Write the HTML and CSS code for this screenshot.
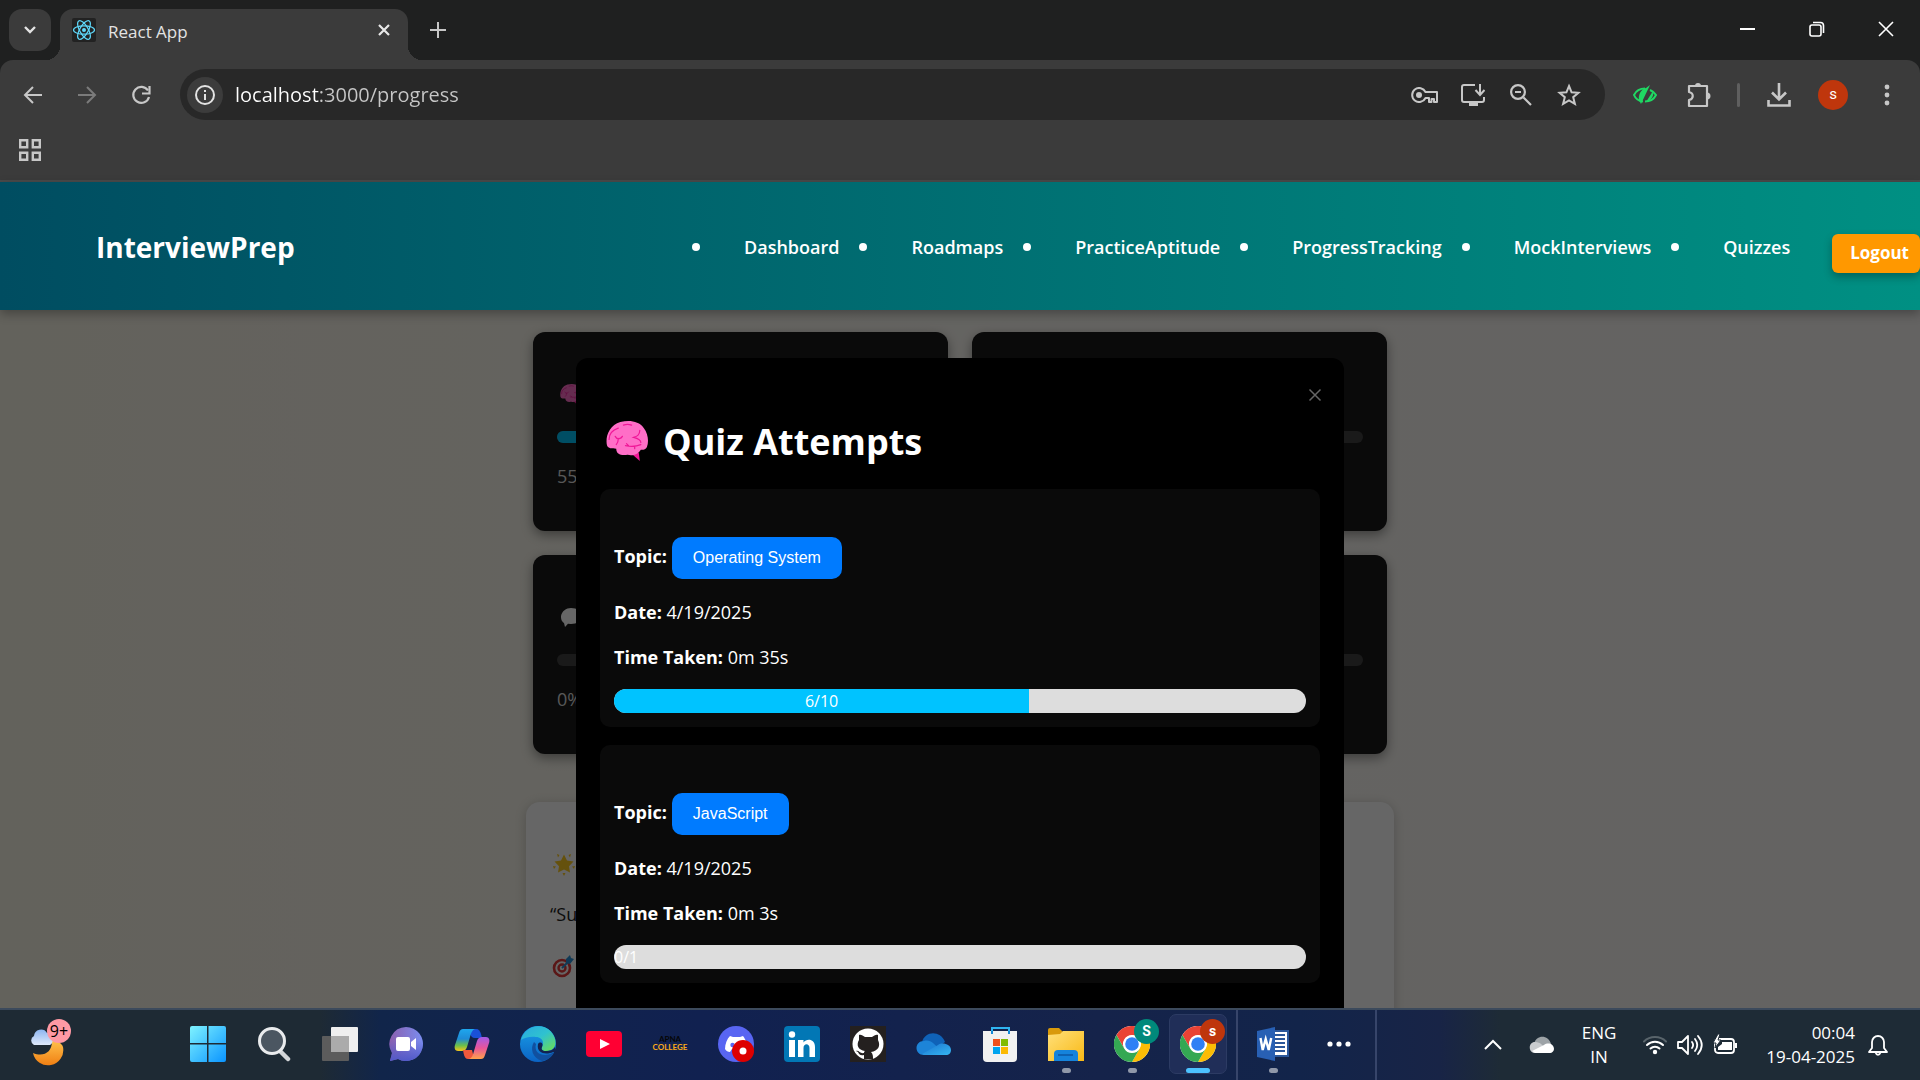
FILE: index.html
```html
<!DOCTYPE html>
<html lang="en">
<head>
<meta charset="utf-8">
<title>React App</title>
<link rel="stylesheet" href="styles.css">
</head>
<body>
<svg class="defs" aria-hidden="true">
  <defs>
    <linearGradient id="win" x1="0" y1="0" x2="1" y2="1"><stop offset="0" stop-color="#7ff3ff"/><stop offset="1" stop-color="#0a94ff"/></linearGradient>
    <linearGradient id="moon" x1="0" y1="0" x2="0" y2="1"><stop offset="0" stop-color="#ffc04a"/><stop offset="1" stop-color="#f07f13"/></linearGradient>
    <linearGradient id="cloud" x1="0" y1="0" x2="0" y2="1"><stop offset="0" stop-color="#8db5f0"/><stop offset="1" stop-color="#dfe9fb"/></linearGradient>
    <linearGradient id="chat" x1="0" y1="0" x2="1" y2="0"><stop offset="0" stop-color="#8a5fae"/><stop offset="1" stop-color="#7a8df0"/></linearGradient>
    <linearGradient id="chat2" x1="0" y1="0" x2="0" y2="1"><stop offset=".4" stop-color="#5059c9" stop-opacity="0"/><stop offset="1" stop-color="#5059c9"/></linearGradient>
    <linearGradient id="copA" x1="0" y1="0" x2="0" y2="1"><stop offset="0" stop-color="#1ea7ee"/><stop offset=".45" stop-color="#1f8bd6"/><stop offset=".75" stop-color="#6cc04a"/><stop offset="1" stop-color="#f6c51b"/></linearGradient>
    <linearGradient id="copB" x1="0" y1="0" x2="0" y2="1"><stop offset="0" stop-color="#a35be8"/><stop offset=".5" stop-color="#e8559a"/><stop offset="1" stop-color="#ffa24a"/></linearGradient>
    <linearGradient id="edgeA" x1="0" y1="0" x2="1" y2="1"><stop offset="0" stop-color="#2aa9e0"/><stop offset=".5" stop-color="#2fc2cf"/><stop offset="1" stop-color="#6fe04c"/></linearGradient>
    <linearGradient id="edgeB" x1="0" y1="0" x2="0" y2="1"><stop offset="0" stop-color="#1aa0e8"/><stop offset="1" stop-color="#0b63c4"/></linearGradient>
    <linearGradient id="od" x1="0" y1="0" x2="1" y2="1"><stop offset="0" stop-color="#1b74d0"/><stop offset="1" stop-color="#35b6f2"/></linearGradient>
    <linearGradient id="fold" x1="0" y1="0" x2="1" y2="1"><stop offset="0" stop-color="#ffe07a"/><stop offset="1" stop-color="#f9b916"/></linearGradient>
    <symbol id="brain" viewBox="0 0 41 39">
      <path fill="#f01898" d="M25 32l8 7-1-8z"/>
      <path fill="#ff6ec7" d="M1 24C-1 16 3 4 14 1c9-2 18-1 23 6 4 5 5 13 3 18-1 3-4 3-6 3-3 5-8 6-13 5-7 1-11-1-11-6-4 0-8 0-9-3z"/>
      <path fill="none" stroke="#f01898" stroke-width="1.2" stroke-linecap="round" d="M3 18c0-6 3-9 9-11M17 4c3-1 5-1 8 0M9 15c2 4 6 2 7 0M12 17c0 3 0 4-2 6M33 9c0 5-3 6-6 7 4 1 7 2 7 5M19 24c5 1 10 1 15-1M22 24l-2-2M28 25v2"/>
    </symbol>
    <symbol id="chrome" viewBox="0 0 36 36">
      <circle cx="18" cy="18" r="18" fill="#fff"/>
      <path fill="#ea4335" d="M2.4 9A18 18 0 0 1 33.600 9H18a9 9 0 0 0-7.800 13.500z"/>
      <path fill="#fbbc05" d="M33.600 9A18 18 0 0 1 18 36l7.800-13.500A9 9 0 0 0 18 9z"/>
      <path fill="#34a853" d="M18 36A18 18 0 0 1 2.400 9l7.800 13.500A9 9 0 0 0 25.800 22.500z"/>
      <circle cx="18" cy="18" r="8.500" fill="#fff"/><circle cx="18" cy="18" r="6.800" fill="#2f80f5"/>
    </symbol>
  </defs>
</svg>

<header class="browser">
  <div class="tabstrip">
    <button class="tab-search" aria-label="Search tabs"><svg width="14" height="10" viewBox="0 0 14 10"><path d="M2 2l5 5 5-5" fill="none" stroke="#e3e3e3" stroke-width="2.400"/></svg></button>
    <div class="tab">
      <svg width="24" height="24" viewBox="0 0 24 24"><rect width="24" height="24" rx="2" fill="#222"/><g fill="none" stroke="#5fd8fa" stroke-width="1.200"><ellipse cx="12" cy="12" rx="10.500" ry="4.200"/><ellipse cx="12" cy="12" rx="10.500" ry="4.200" transform="rotate(60 12 12)"/><ellipse cx="12" cy="12" rx="10.500" ry="4.200" transform="rotate(120 12 12)"/></g><circle cx="12" cy="12" r="2" fill="#5fd8fa"/></svg>
      <span class="tab-title">React App</span>
      <button class="icon-btn" aria-label="Close tab"><svg width="14" height="14" viewBox="0 0 14 14"><path d="M2 2l10 10M12 2L2 12" stroke="#e8e8e8" stroke-width="2.200"/></svg></button>
    </div>
    <button class="icon-btn new-tab" aria-label="New tab"><svg width="16" height="16" viewBox="0 0 16 16"><path d="M8 0v16M0 8h16" stroke="#c7c7c7" stroke-width="2"/></svg></button>
    <div class="window-controls">
      <button aria-label="Minimize"><svg width="16" height="16" viewBox="0 0 16 16"><path d="M0 8h15" stroke="#fff" stroke-width="2"/></svg></button>
      <button aria-label="Restore"><svg width="16" height="16" viewBox="0 0 16 16"><g fill="none" stroke="#fff" stroke-width="1.600"><rect x="1" y="4" width="11" height="11" rx="2"/><path d="M4 1.500h7.500a3 3 0 0 1 3 3V12"/></g></svg></button>
      <button aria-label="Close"><svg width="16" height="16" viewBox="0 0 16 16"><path d="M1 1l14 14M15 1L1 15" stroke="#fff" stroke-width="1.600"/></svg></button>
    </div>
  </div>
  <div class="toolbar">
    <div class="nav-buttons">
      <button aria-label="Back"><svg width="20" height="20" viewBox="0 0 20 20"><path d="M19 10H2M10 2l-8 8 8 8" fill="none" stroke="#c7c7c7" stroke-width="2"/></svg></button>
      <button aria-label="Forward"><svg width="20" height="20" viewBox="0 0 20 20"><path d="M1 10h17M10 2l8 8-8 8" fill="none" stroke="#7b7b7b" stroke-width="2"/></svg></button>
      <button aria-label="Reload"><svg width="20" height="20" viewBox="0 0 20 20"><path d="M17 5.500A8 8 0 1 0 18 12" fill="none" stroke="#c7c7c7" stroke-width="2.200"/><path d="M18.500 1v7.500H11" fill="none" stroke="#c7c7c7" stroke-width="2.200"/></svg></button>
    </div>
    <div class="omnibox">
      <button class="site-info" aria-label="Site information"><svg width="20" height="20" viewBox="0 0 20 20"><circle cx="10" cy="10" r="9" fill="none" stroke="#e3e3e3" stroke-width="2"/><path d="M10 9v6M10 5v2" stroke="#e3e3e3" stroke-width="2"/></svg></button>
      <input class="url" type="text" aria-label="Address" value="localhost:3000/progress">
      <button aria-label="Passwords"><svg width="28" height="16" viewBox="0 0 28 16"><path fill="none" stroke="#c7c7c7" stroke-width="2" stroke-linejoin="round" d="M14.500 5A7 7 0 1 0 14.500 11H18v4h2.500v-3H23v3h3V5z"/><circle cx="8" cy="8" r="3" fill="#c7c7c7"/></svg></button>
      <button aria-label="Install"><svg width="24" height="22" viewBox="0 0 24 22"><path fill="none" stroke="#c7c7c7" stroke-width="2" d="M14 1H3a2 2 0 0 0-2 2v13a2 2 0 0 0 2 2h18a2 2 0 0 0 2-2v-3M19 0v10M14.500 6l4.500 5 4.500-5"/><path fill="#c7c7c7" d="M8 18h9v4H8z"/></svg></button>
      <button aria-label="Zoom"><svg width="22" height="22" viewBox="0 0 22 22"><path fill="none" stroke="#c7c7c7" stroke-width="2.200" d="M13.500 13.500L21 21M5 8h6"/><circle cx="8" cy="8" r="6.900" fill="none" stroke="#c7c7c7" stroke-width="2.200"/></svg></button>
      <button aria-label="Bookmark"><svg width="24" height="24" viewBox="0 0 24 24"><path fill="none" stroke="#c7c7c7" stroke-width="2" d="M12 3l2.600 6.300 6.800.5-5.200 4.400 1.700 6.700L12 17.300l-5.900 3.600 1.700-6.700-5.200-4.400 6.800-.5z"/></svg></button>
    </div>
    <div class="extensions">
      <button aria-label="Privacy extension"><svg width="24" height="20" viewBox="0 0 24 20"><path fill="none" stroke="#1fd863" stroke-width="2" d="M10 16.500C5 16 2 12.500 1 10c2-4 6-6.500 11-6.500M17 5c3 1.300 5 3.300 6 5-2 4-6 6.500-11 6.500"/><path fill="#1fd863" d="M17 0L8 19l-2-4C5 10 8 4 13 3zM20 6l-7 11 4-2c3-3 4-6 3-9z"/></svg></button>
      <button aria-label="Extensions"><svg width="26" height="26" viewBox="0 0 26 26"><path fill="none" stroke="#c7c7c7" stroke-width="2.200" stroke-linejoin="round" d="M3 4h18v20H3v-6c5-1 5-7 0-8z"/><path fill="#c7c7c7" d="M9 4a3 3 0 0 1 6 0zM21 10.500a3 3 0 0 1 0 7z"/></svg></button>
      <span class="divider"></span>
      <button aria-label="Downloads"><svg width="24" height="24" viewBox="0 0 24 24"><path fill="none" stroke="#c7c7c7" stroke-width="2.600" d="M12 0v16M5 9.500l7 7 7-7M1.500 17v5.500h21V17"/></svg></button>
      <button aria-label="Profile"><span class="avatar">s</span></button>
      <button aria-label="Menu"><svg width="6" height="22" viewBox="0 0 6 22" fill="#c7c7c7"><circle cx="3" cy="3" r="2.400"/><circle cx="3" cy="11" r="2.400"/><circle cx="3" cy="19" r="2.400"/></svg></button>
    </div>
  </div>
  <div class="bookmarks">
    <button class="icon-btn" aria-label="Apps"><svg width="22" height="22" viewBox="0 0 22 22"><path fill="none" stroke="#c7c7c7" stroke-width="2.400" d="M1.200 1.200h7v7h-7zM13.800 1.200h7v7h-7zM1.200 13.800h7v7h-7zM13.800 13.800h7v7h-7z"/></svg></button>
  </div>
</header>

<div class="page">
  <nav class="navbar">
    <div class="brand">InterviewPrep</div>
    <ul class="links">
      <li><a href="#">Dashboard</a></li>
      <li><a href="#">Roadmaps</a></li>
      <li><a href="#">PracticeAptitude</a></li>
      <li><a href="#">ProgressTracking</a></li>
      <li><a href="#">MockInterviews</a></li>
      <li><a href="#">Quizzes</a></li>
    </ul>
    <button class="logout">Logout</button>
  </nav>
  <main class="content">
    <div class="cards">
      <section class="card">
        <h3><svg width="22" height="21"><use href="#brain"/></svg></h3>
        <div class="track"><div class="fill" style="width:55%"></div></div>
        <p>55%</p>
      </section>
      <section class="card"><h3></h3><div class="track"></div></section>
      <section class="card">
        <h3><svg width="22" height="21" viewBox="0 0 22 21"><path fill="#fff" d="M11 1c6 0 10 3 10 8s-4 8-10 8l-3-.3L5 20l-1-4C1 14 1 11 1 9c1-5 5-8 10-8z"/></svg></h3>
        <div class="track"></div>
        <p>0%</p>
      </section>
      <section class="card"><h3></h3><div class="track"></div></section>
    </div>
    <section class="quote">
      <p><svg width="24" height="24" viewBox="0 0 24 24" fill="#fdca22"><path d="M12 2.500l3 6 6.500 1-4.500 4.700 1 6.300-6-3-6 3 1-6.300L2.500 9.500l6.500-1zM5 2l2.500 1-1.500 2.500zM19 2l-2.500 1L18 5.500zM1 14l3 .5L2 17zM23 14l-3 .5L22 17zM10.500 21h3L12 24z"/></svg></p>
      <p>“Success</p>
      <p><svg width="24" height="24" viewBox="0 0 24 24"><circle cx="10" cy="14" r="8" fill="none" stroke="#e03a3a" stroke-width="2.600"/><circle cx="10" cy="14" r="3.500" fill="none" stroke="#e03a3a" stroke-width="2.400"/><path d="M10 14l6-6" stroke="#2c91d8" stroke-width="2"/><path fill="#2c91d8" d="M14 5l4-4 1 3 3 1-4 5-4-1z"/></svg></p>
    </section>
    <div class="overlay">
      <div class="modal" role="dialog" aria-labelledby="modal-title">
        <button class="modal-close" aria-label="Close dialog"><svg width="14" height="14" viewBox="0 0 14 14"><path d="M1.500 1.500l11 11M12.500 1.500l-11 11" stroke="#666" stroke-width="1.500"/></svg></button>
        <h2 id="modal-title"><svg width="42" height="40"><use href="#brain"/></svg>Quiz Attempts</h2>
        <article class="attempt">
          <p class="topic"><strong>Topic:</strong><button>Operating System</button></p>
          <p><strong>Date:</strong> 4/19/2025</p>
          <p><strong>Time Taken:</strong> 0m 35s</p>
          <div class="score"><div class="score-fill" style="width:60%">6/10</div></div>
        </article>
        <article class="attempt">
          <p class="topic"><strong>Topic:</strong><button>JavaScript</button></p>
          <p><strong>Date:</strong> 4/19/2025</p>
          <p><strong>Time Taken:</strong> 0m 3s</p>
          <div class="score"><div class="score-fill" style="width:0%">0/1</div></div>
        </article>
      </div>
    </div>
  </main>
</div>

<footer class="taskbar">
  <button class="weather" aria-label="Weather"><svg width="44" height="44" viewBox="0 0 44 44"><path fill="url(#moon)" d="M34 24a15 15 0 0 1-30 6c10 4 19 0 19-12 5 0 10 2 11 6z"/><path fill="url(#cloud)" d="M5 22a5 5 0 0 1 0-9 7 7 0 0 1 13-3c6-1 8 10 3 12z"/></svg><span class="weather-badge">9+</span></button>
  <div class="apps">
    <button aria-label="Start"><svg width="36" height="36" viewBox="0 0 36 36"><path fill="url(#win)" d="M2 0h15v17H0V2a2 2 0 0 1 2-2zM18.500 0H34a2 2 0 0 1 2 2v15H18.500zM0 18.500h17V36H2a2 2 0 0 1-2-2zM18.500 18.500H36V34a2 2 0 0 1-2 2H18.500z"/></svg></button>
    <button aria-label="Search"><svg width="36" height="36" viewBox="0 0 36 36"><path d="M24 25l8 8" stroke="#d3d6d9" stroke-width="4.500" stroke-linecap="round"/><circle cx="16" cy="15" r="12.500" fill="#4b5661" stroke="#e9ebed" stroke-width="3"/></svg></button>
    <button aria-label="Task view"><svg width="36" height="36" viewBox="0 0 36 36"><rect x="0" y="10" width="27" height="25" rx="1" fill="#5c5c5c"/><rect x="9" y="1" width="27" height="25" rx="1" fill="#efefef"/><path fill="#ababab" d="M9 10h18v16H9z"/></svg></button>
    <button aria-label="Chat"><svg width="36" height="36" viewBox="0 0 36 36"><path fill="url(#chat)" d="M18 1a17 17 0 1 1-8 32l-8 2 2-8A17 17 0 0 1 18 1z"/><path fill="url(#chat2)" d="M18 1a17 17 0 1 1-8 32l-8 2 2-8A17 17 0 0 1 18 1z"/><rect x="8" y="11" width="14" height="14" rx="2" fill="#fff"/><path fill="#fff" d="M23 16l5-4v12l-5-4z"/></svg></button>
    <button aria-label="Copilot"><svg width="36" height="36" viewBox="0 0 36 36"><path fill="#1a50d8" d="M15 3h7c3 0 4 2 5 5l1 4h-7c-3 0-4-2-5-4z"/><path fill="url(#copA)" d="M9 3h12c-3 1-4 4-5 8l-3 10c-1 3-3 4-5 4H4c-3 0-4-3-3-6L5 7c1-3 2-4 4-4z"/><path fill="#f0583c" d="M9 24h9l2 8-1 1h-5c-3 0-4-3-5-9z"/><path fill="url(#copB)" d="M27 33H15c3-1 4-4 5-8l3-10c1-3 3-4 5-4h4c3 0 4 3 3 6l-4 12c-1 3-2 4-4 4z"/></svg></button>
    <button aria-label="Edge"><svg width="36" height="36" viewBox="0 0 36 36"><circle cx="18" cy="18" r="18" fill="url(#edgeB)"/><path fill="url(#edgeA)" d="M1 14C5-2 29-6 35 13c2 8-3 12-9 12-4 0-5-2-4-4 3-6-1-10-6-10-6-1-12 1-15 3z"/><path fill="#11509f" d="M14 16c-4 6-2 16 8 19 6-1 10-4 12-9-8 6-21 3-18-8z"/><path fill="#122350" d="M22 21c-1 2 0 4 4 4 4 0 7-1 9-4l1 5-3 0c-6 3-17 2-15-8 2-3 6-1 4 3z"/></svg></button>
    <button aria-label="YouTube"><svg width="36" height="36" viewBox="0 0 36 36"><rect y="5" width="36" height="26" rx="4" fill="#ff0033"/><path fill="#fff" d="M14 13l10 5-10 5z"/></svg></button>
    <button class="apna" aria-label="Apna College"><span>APNA</span><span class="gold">COLLEGE</span></button>
    <button aria-label="Discord"><svg width="36" height="36" viewBox="0 0 36 36"><circle cx="18" cy="18" r="18" fill="#5865f2"/><path fill="#fff" d="M12 10l3 1h7l3-1c3 4 5 9 4 13-1 2-3 3-5 3l-2-3h-8l-2 3c-2 0-4-1-5-3 0-5 2-10 5-13z"/><circle cx="14.500" cy="19" r="2.200" fill="#5865f2"/><circle cx="25" cy="25" r="11" fill="#dd0000"/><circle cx="25" cy="25" r="3.500" fill="#fff"/></svg></button>
    <button aria-label="LinkedIn"><svg width="36" height="36" viewBox="0 0 36 36"><rect width="36" height="36" rx="4" fill="#0277b5"/><circle cx="8" cy="8.500" r="3.200" fill="#fff"/><path fill="#fff" d="M5 14h6v17H5zM14 14h5.500v2.500c3-4.500 11.500-4 11.500 4.500v10h-5.500v-9c0-5-6-5-6 0v9H14z"/></svg></button>
    <button aria-label="GitHub"><svg width="36" height="36" viewBox="0 0 36 36"><path fill="#24201f" d="M0 0h36v36H0z"/><circle cx="18" cy="18" r="15.500" fill="#fff"/><path fill="#24201f" d="M9 9c2-1 4 1 6 2h7c2-1 4-3 6-2v5c3 6 0 11-7 12 2 2 2 4 2 7H14v-4c-4 1-5-1-6-3l-2-1c3-1 4 3 8 2 0-1 0-1 1-2-7-1-9-6-6-11z"/></svg></button>
    <button aria-label="OneDrive"><svg width="36" height="36" viewBox="0 0 36 36"><path fill="#0f62b8" d="M6 16c3-11 18-12 23 0l-12 9z"/><path fill="#1d84d8" d="M8 29c-10 0-10-14 0-14 3-1 7 0 9 2l13 12z"/><path fill="url(#od)" d="M6 28l16-9c4-3 13-1 13 5 0 3-2 5-5 5H8z"/></svg></button>
    <button aria-label="Microsoft Store"><svg width="36" height="36" viewBox="0 0 36 36"><path fill="none" stroke="#2fb4f0" stroke-width="2" d="M10 8V2h17v6"/><path fill="#f1f1f1" d="M1 5h34v27a4 4 0 0 1-4 4H5a4 4 0 0 1-4-4z"/><path fill="none" stroke="#1489d8" stroke-width="2" d="M10 5v3M27 5v3"/><path fill="#f1511b" d="M11 13h7v7h-7z"/><path fill="#80bb03" d="M19 13h7v7h-7z"/><path fill="#00a4ef" d="M11 21h7v7h-7z"/><path fill="#fbb902" d="M19 21h7v7h-7z"/></svg></button>
    <button class="running" aria-label="File Explorer"><svg width="36" height="36" viewBox="0 0 36 36"><path fill="#d99a0b" d="M0 4a2 2 0 0 1 2-2h9l4 4v5H0z"/><path fill="url(#fold)" d="M0 9l12-1 3-3h21v30H0z"/><path fill="#1583dc" d="M6 35v-7a4 4 0 0 1 4-4h16a4 4 0 0 1 4 4v7z"/><path d="M10 29h15" stroke="#0b56a4" stroke-width="1.500"/></svg></button>
    <button class="running" aria-label="Chrome, profile S"><svg width="36" height="36"><use href="#chrome"/></svg><span class="badge badge-teal">S</span></button>
    <button class="running active" aria-label="Chrome, profile s"><svg width="36" height="36"><use href="#chrome"/></svg><span class="badge">s</span></button>
  </div>
  <div class="apps more">
    <button class="running" aria-label="Word"><svg width="36" height="36" viewBox="0 0 36 36"><path fill="#fff" d="M18 4h15v27H18z"/><path fill="none" stroke="#2b579a" stroke-width="2" d="M18 5h15v25H18M20 9h10M20 13h10M20 17h10M20 21h10M20 25h10"/><path fill="#2860b4" d="M2 5l18-4v34L2 31z"/><path fill="none" stroke="#fff" stroke-width="2.400" d="M5.500 12l2.200 12 3-11 3 11 2.500-12"/></svg></button>
    <button aria-label="More apps"><svg width="26" height="8" viewBox="0 0 26 8" fill="#fff"><circle cx="4" cy="4" r="2.600"/><circle cx="13" cy="4" r="2.600"/><circle cx="22" cy="4" r="2.600"/></svg></button>
  </div>
  <div class="tray">
    <button aria-label="Show hidden icons"><svg width="18" height="12" viewBox="0 0 18 12"><path d="M1 10l8-8 8 8" fill="none" stroke="#fff" stroke-width="2"/></svg></button>
    <button aria-label="Cloud sync"><svg width="26" height="18" viewBox="0 0 26 18"><path fill="#9da3a7" d="M5 8c2-9 14-10 17 0l-9 4z"/><path fill="#c9cccf" d="M6 17C-1 17-1 6 6 6c3 0 5 1 6 2l10 9z"/><path fill="#fff" d="M3 15l12-6c4-3 10-1 10 4 0 2-2 4-4 4H6z"/></svg></button>
    <button class="lang">ENG<br>IN</button>
    <button class="status" aria-label="Network, volume and battery">
      <svg width="24" height="20" viewBox="0 0 24 20"><g fill="none" stroke="#fff" stroke-width="2" stroke-linecap="round"><path stroke="#59646b" d="M1 6.500a16 16 0 0 1 22 0"/><path d="M4 10a11.500 11.500 0 0 1 16 0M7.500 13.500a6.500 6.500 0 0 1 9 0"/></g><circle cx="12" cy="17" r="2.200" fill="#fff"/></svg>
      <svg width="26" height="22" viewBox="0 0 26 22"><g fill="none" stroke="#fff" stroke-width="1.800" stroke-linecap="round" stroke-linejoin="round"><path d="M1 8h4l6-6v18l-6-6H1zM15 8c1.500 2 1.500 4 0 6M18 5c3 4 3 8 0 12M21 2c5 6 5 12 0 18"/></g></svg>
      <svg width="26" height="22" viewBox="0 0 26 22"><rect x="2" y="5" width="19" height="14" rx="3" fill="none" stroke="#fff" stroke-width="1.800"/><path fill="#fff" d="M9 8h10v8H5v-3l4-3zM22 9h2v5h-2z"/><path fill="#fff" stroke="#1e2b36" stroke-width="1" d="M5 0L0 9h3l-1 5 6-8H5l2-6z"/></svg>
    </button>
    <button class="clock">00:04<br>19-04-2025</button>
    <button aria-label="Notifications"><svg width="20" height="22" viewBox="0 0 20 22"><path fill="none" stroke="#fff" stroke-width="1.800" stroke-linejoin="round" d="M4 14V8a6 6 0 0 1 12 0v6l3 4H1zM7.500 18.500c1 3 4 3 5 0"/></svg></button>
  </div>
</footer>
</body>
</html>
```
FILE: styles.css
```css
* { box-sizing: border-box; }
body {
  margin: 0;
  height: 100vh;
  display: flex;
  flex-direction: column;
  overflow: hidden;
  font-family: "Open Sans", "Noto Sans", sans-serif;
  font-size: 18px;
  line-height: 27px;
}
button {
  border: 0;
  padding: 0;
  background: none;
  color: inherit;
  font: inherit;
  display: flex;
  align-items: center;
  justify-content: center;
}
svg { display: block; flex: none; }
p, h2, h3, ul { margin: 0; padding: 0; }
.defs { position: absolute; width: 0; height: 0; }

/* Browser frame */
.browser { flex: none; background: #1f2020; border-bottom: 2px solid #4a4a4a; }
.tabstrip { display: flex; height: 60px; padding: 9px 0 0 9px; align-items: flex-start; }
.tab-search { width: 42px; height: 42px; border-radius: 13px; background: #3b3b3b; }
.tab {
  position: relative;
  display: flex;
  align-items: center;
  gap: 12px;
  width: 348px;
  height: 51px;
  margin-left: 9px;
  padding: 0 13px 9px 12px;
  border-radius: 13px 13px 0 0;
  background: #3b3b3b;
}
.tab::before, .tab::after {
  content: "";
  position: absolute;
  bottom: 0;
  width: 14px;
  height: 14px;
}
.tab::before { right: 100%; background: radial-gradient(circle at 0 0, transparent 14px, #3b3b3b 14px); }
.tab::after { left: 100%; background: radial-gradient(circle at 100% 0, transparent 14px, #3b3b3b 14px); }
.tab-title { flex: 1; font-size: 17px; color: #e3e3e3; padding-top: 3px; }
.icon-btn { width: 22px; height: 22px; }
.new-tab { margin: 10px 0 0 19px; }
.window-controls { display: flex; margin-left: auto; }
.window-controls button { width: 69px; height: 40px; }
.toolbar {
  display: flex;
  align-items: center;
  height: 60px;
  padding-top: 9px;
  background: #3b3b3b;
  border-radius: 13px 13px 0 0;
}
.nav-buttons { display: flex; padding: 0 12px 0 6px; }
.nav-buttons button { width: 54px; height: 42px; }
.omnibox {
  display: flex;
  flex: 1;
  align-items: center;
  height: 51px;
  padding: 0 12px 0 7px;
  border-radius: 26px;
  background: #282828;
}
.omnibox button { width: 48px; height: 36px; }
.omnibox .site-info { width: 36px; border-radius: 18px; background: #3c3c3c; }
.url {
  flex: 1;
  min-width: 0;
  margin-left: 12px;
  padding: 0;
  border: 0;
  font: 20px/30px "Open Sans", "Noto Sans", sans-serif;
  color: transparent;
  background: linear-gradient(90deg, #fff 84px, #c7c7c7 84px);
  -webkit-background-clip: text;
  background-clip: text;
}
.extensions { display: flex; align-items: center; padding: 0 6px 0 13px; }
.extensions button { width: 54px; height: 42px; }
.divider { width: 3px; height: 24px; margin: 0 12px 0 11px; border-radius: 2px; background: #5f5f5f; }
.avatar {
  width: 30px;
  height: 30px;
  border-radius: 50%;
  background: #bf360c;
  color: #fff;
  font: 15px/29px Roboto, sans-serif;
}
.bookmarks { display: flex; align-items: center; height: 60px; padding-left: 19px; background: #3b3b3b; }

/* Page */
.page { flex: 1; min-height: 0; display: flex; flex-direction: column; }
.navbar {
  position: relative;
  z-index: 2;
  flex: none;
  display: flex;
  align-items: center;
  height: 128px;
  padding: 2px 0 0 96px;
  background: linear-gradient(90deg, #004d61, #009083);
  box-shadow: 0 4px 10px rgba(0, 0, 0, .3);
  color: #fff;
}
.brand { font-size: 28px; font-weight: 700; }
.links { display: flex; gap: 20px; margin-left: auto; list-style: none; font-weight: 600; }
.links li { display: flex; align-items: center; gap: 44px; }
.links li::before { content: ""; width: 8px; height: 8px; border-radius: 50%; background: #fff; }
.links a { color: inherit; text-decoration: none; }
.logout {
  height: 39px;
  margin: 12px 0 0 42px;
  padding: 0 11px 2px 18px;
  border-radius: 6px;
  background: #ff9800;
  box-shadow: 0 4px 8px rgba(0, 0, 0, .3);
  font-size: 17px;
  font-weight: 700;
}
.content {
  position: relative;
  flex: 1;
  min-height: 0;
  padding-top: 22px;
  overflow: hidden;
  background: linear-gradient(90deg, #f8f5e6, #fbf9f3 50%, #f9f7f4);
}
.cards {
  display: grid;
  grid-template-columns: 1fr 1fr;
  grid-auto-rows: 199px;
  gap: 24px;
  width: 854px;
  max-width: 100%;
  margin: 0 auto;
}
.card {
  padding: 24px;
  border-radius: 12px;
  background: #1a1a1a;
  box-shadow: 0 4px 12px rgba(0, 0, 0, .4);
  color: #ddd;
}
.card h3 { height: 28px; margin: 24px 0 23px 3px; display: flex; align-items: center; }
.card p { margin-top: 20px; }
.track { height: 12px; border-radius: 6px; background: #424242; overflow: hidden; }
.fill { height: 100%; background: #00c3fb; }
.quote {
  width: 868px;
  max-width: 100%;
  height: 300px;
  margin: 48px auto 0;
  padding: 24px;
  border-radius: 14px;
  background: #fff;
  box-shadow: 0 2px 12px rgba(0, 0, 0, .2);
  color: #222;
}
.quote p { height: 27px; margin-top: 24px; display: flex; align-items: center; }
.quote svg { margin-left: 2px; }
.overlay {
  position: absolute;
  inset: 0;
  display: flex;
  justify-content: center;
  padding-top: 48px;
  background: rgba(0, 0, 0, .6);
}
.modal {
  position: relative;
  width: 40%;
  min-width: 480px;
  height: 800px;
  padding: 24px;
  border-radius: 12px;
  background: #000;
  color: #fff;
}
.modal-close { position: absolute; top: 26px; right: 18px; width: 22px; height: 22px; }
.modal h2 {
  display: flex;
  align-items: center;
  gap: 15px;
  height: 54px;
  margin: 32px 0 21px 6px;
  font-size: 36px;
  font-weight: 700;
}
.attempt { margin-bottom: 18px; padding: 48px 14px 14px; border-radius: 10px; background: #0a0a0a; }
.attempt p { margin-bottom: 18px; }
.attempt .topic { display: flex; align-items: baseline; gap: 5px; margin-bottom: 20px; }
.topic button {
  height: 42px;
  padding: 0 21px;
  border-radius: 10px;
  background: #007bff;
  font: 16px "Liberation Sans", Arial, sans-serif;
}
.score { height: 24px; border-radius: 12px; background: #ddd; overflow: hidden; }
.score-fill { height: 24px; background: #00c3ff; font-size: 16px; line-height: 24px; text-align: center; }

/* Taskbar */
.taskbar {
  flex: none;
  display: flex;
  align-items: center;
  height: 72px;
  border-top: 2px solid #3c4a5c;
  background: linear-gradient(90deg, #1e2a34 0 320px, #11254a 380px, #112150 700px, #15234a 1100px, #12244a 1300px, #182446 1440px, #1e2b36 1500px);
  color: #fff;
}
.weather { position: relative; width: 44px; height: 44px; margin-left: 29px; }
.weather-badge {
  position: absolute;
  top: -4px;
  right: 2px;
  width: 24px;
  height: 24px;
  border-radius: 50%;
  background: #ff99a4;
  color: #000;
  font-size: 16px;
  line-height: 24px;
}
.apps { display: flex; margin-left: 102px; }
.apps button { position: relative; width: 66px; height: 70px; padding-bottom: 2px; }
.more { margin-left: 5px; padding: 0 3px 0 2px; border: 2px solid #37456a; border-width: 0 2px; }
.running::after {
  content: "";
  position: absolute;
  bottom: 7px;
  width: 9px;
  height: 5px;
  border-radius: 3px;
  background: #9098a9;
}
.active::before {
  content: "";
  position: absolute;
  inset: 4px 4px 6px 4px;
  border: 1px solid #2c3b63;
  border-radius: 7px;
  background: #202e58;
}
.active::after { width: 24px; background: #4cc2ff; }
.active svg { position: relative; }
.badge {
  position: absolute;
  top: 9px;
  left: 35px;
  width: 25px;
  height: 25px;
  border-radius: 50%;
  background: #bf360c;
  font: 700 14px/25px Roboto, sans-serif;
}
.badge-teal { background: #00897b; }
.apps .apna {
  flex-direction: column;
  padding-bottom: 4px;
  color: #050505;
  font: 700 8px/8px Lato, sans-serif;
}
.gold { color: #fbaa19; }
.tray { display: flex; align-items: center; margin-left: auto; padding-right: 32px; font-size: 17px; line-height: 24px; }
.tray button + button { margin-left: 27px; }
.lang { text-align: center; }
.tray .status { gap: 10px; }
.tray .clock { text-align: right; }
.tray .clock + button { margin-left: 13px; }
```
